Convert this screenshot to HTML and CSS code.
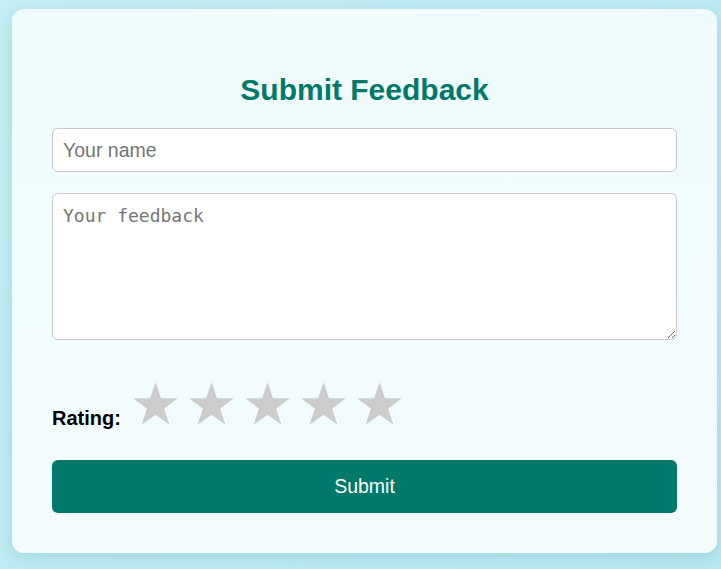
FILE: index.html
```html
<!DOCTYPE html>
<html lang="en">
<head>
<meta charset="utf-8">
<title>Submit Feedback</title>
<link rel="stylesheet" href="styles.css">
</head>
<body>
<div class="card">
  <h2 class="title">Submit Feedback</h2>
  <form class="form">
    <input class="field" type="text" placeholder="Your name">
    <textarea class="field area" placeholder="Your feedback"></textarea>
    <div class="rating">
      <span class="rating-label">Rating:</span>
      <div class="stars">
        <svg class="star" viewBox="0 0 45 43"><polygon points="22.5,0 27.9,16.2 45,16.3 31.2,26.4 36.4,42.8 22.5,32.8 8.6,42.8 13.8,26.4 0,16.3 17.1,16.2"/></svg>
        <svg class="star" viewBox="0 0 45 43"><polygon points="22.5,0 27.9,16.2 45,16.3 31.2,26.4 36.4,42.8 22.5,32.8 8.6,42.8 13.8,26.4 0,16.3 17.1,16.2"/></svg>
        <svg class="star" viewBox="0 0 45 43"><polygon points="22.5,0 27.9,16.2 45,16.3 31.2,26.4 36.4,42.8 22.5,32.8 8.6,42.8 13.8,26.4 0,16.3 17.1,16.2"/></svg>
        <svg class="star" viewBox="0 0 45 43"><polygon points="22.5,0 27.9,16.2 45,16.3 31.2,26.4 36.4,42.8 22.5,32.8 8.6,42.8 13.8,26.4 0,16.3 17.1,16.2"/></svg>
        <svg class="star" viewBox="0 0 45 43"><polygon points="22.5,0 27.9,16.2 45,16.3 31.2,26.4 36.4,42.8 22.5,32.8 8.6,42.8 13.8,26.4 0,16.3 17.1,16.2"/></svg>
      </div>
    </div>
    <button class="submit" type="button">Submit</button>
  </form>
</div>
</body>
</html>
```
FILE: styles.css
```css
html, body {
  margin: 0;
  height: 100%;
}
body {
  background: linear-gradient(135deg, #c4eef3 0%, #b6e8ef 100%);
  font-family: "Liberation Sans", Arial, sans-serif;
  padding: 9px 4px 0 12px;
  box-sizing: border-box;
}
.card {
  background: linear-gradient(180deg, #effbfd 0%, #f3fcfd 100%);
  border-radius: 12px;
  box-shadow: 0 4px 14px rgba(0, 90, 110, 0.14);
  padding: 40px 40px 40px 40px;
}
.title {
  margin: 24px 0 21px;
  text-align: center;
  color: #00796b;
  font-size: 30px;
  font-weight: bold;
  line-height: normal;
}
.form {
  display: flex;
  flex-direction: column;
  margin: 0;
}
.field {
  display: block;
  box-sizing: border-box;
  width: 100%;
  height: 44px;
  margin: 0;
  padding: 10px;
  border: 1px solid #c9c9c9;
  border-radius: 6px;
  background: #fff;
  font-family: "Liberation Sans", Arial, sans-serif;
  font-size: 19.5px;
  color: #222;
  outline: none;
}
.field::placeholder {
  color: #757575;
}
.area {
  height: 147px;
  margin-top: 21px;
  padding-top: 11px;
  font-family: "DejaVu Sans Mono", monospace;
  font-size: 18px;
  resize: vertical;
}
.rating {
  display: flex;
  align-items: baseline;
  margin-top: 42px;
}
.rating-label {
  font-size: 20px;
  font-weight: bold;
  color: #000;
  margin-right: 12px;
}
.stars {
  display: flex;
  align-items: flex-end;
  gap: 11px;
}
.star {
  display: block;
  width: 45px;
  height: 43px;
  fill: #cccccc;
}
.submit {
  margin-top: 30px;
  height: 53px;
  border: none;
  border-radius: 6px;
  background: #00796b;
  color: #fff;
  font-family: "Liberation Sans", Arial, sans-serif;
  font-size: 19.5px;
  cursor: pointer;
}
```
